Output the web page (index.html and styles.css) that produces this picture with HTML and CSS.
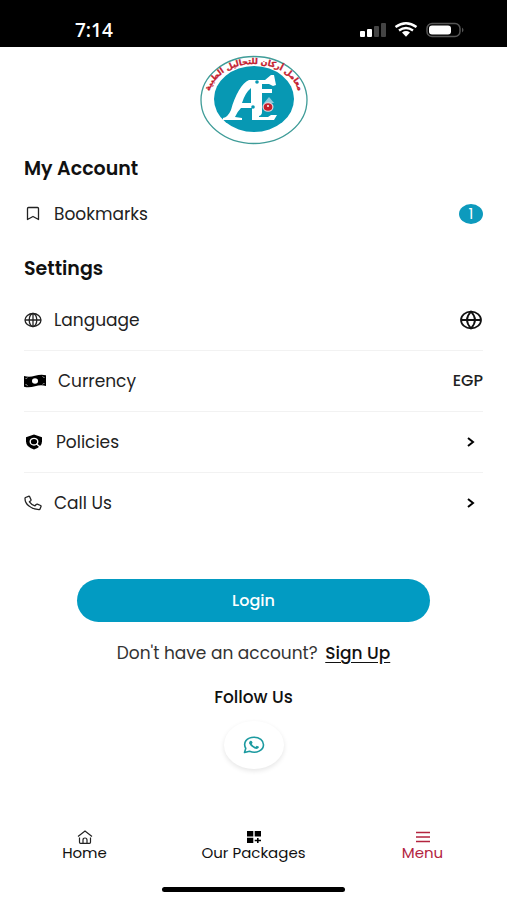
FILE: index.html
```
<!DOCTYPE html>
<html lang="en">
  <head>
    <meta charset="UTF-8" />
    <meta name="viewport" content="width=device-width, initial-scale=1.0" />
    <title>Menu</title>
    <link rel="stylesheet" href="styles.css">
  </head>

  <body>
    <div class="status">
      <span class="time">7:14</span>
      <svg width="104" height="16" viewBox="0 0 104 16">
        <g fill="#fff">
          <rect x="0" y="9" width="5" height="6" rx="1" />
          <rect x="7" y="7" width="5" height="8" rx="1" />
          <rect x="14" y="4" width="5" height="11" rx="1" fill="#444" />
          <rect x="21" y="1" width="5" height="14" rx="1" fill="#444" />
          <path d="M42 10.500Q46 7.600 50 10.500L46 14.800Z" />
        </g>
        <path d="M35.500 5Q46 -2.500 56.500 5M39 8.400Q46 3.400 53 8.400" fill="none" stroke="#fff" stroke-width="2.400" />
        <rect x="67" y="1.500" width="33" height="13" rx="5" fill="none" stroke="#555" stroke-width="1.500" />
        <rect x="69" y="3.500" width="22" height="9" rx="3" fill="#fff" />
        <path d="M102 5.500Q105 8 102 10.500Z" fill="#555" />
      </svg>
    </div>

    <main>
      <div class="logo">
        <svg width="110" height="90" viewBox="0 0 110 90" role="img" aria-label="معامل أركان للتحاليل الطبية">
          <ellipse cx="55" cy="45" rx="53" ry="43.500" fill="#fff" stroke="#3f9c98" stroke-width="1.300" />
          <ellipse cx="55" cy="44" rx="40" ry="33" fill="#0798b3" />
          <path id="arc" d="M10 42A45 33 0 0 1 100 42" fill="none" />
          <text class="logo-text" direction="rtl" text-anchor="middle"><textPath href="#arc" startOffset="50%">معامل أركان للتحاليل الطبية</textPath></text>
          <path d="M24 65V63Q29 62 32 55C36 40 43 28 50 25L66 25L72 20H75L77 30L74 31L70 29H63V34H73V38H63V57Q63 60 60 61V62H69L72 60H78L75 65H53V53H42Q38 57 36 62L43 63V65ZM43 48H52V33Q46 38 43 48Z" fill="#fff" fill-rule="evenodd" />
          <circle cx="58" cy="27" r="1.800" fill="#0798b3" />
          <circle cx="54" cy="52" r="1.800" fill="#0798b3" />
          <path d="M70 42L65 48H75Z" fill="#8fcbdc" />
          <ellipse cx="69" cy="52" rx="5.500" ry="4.800" fill="#e6d6dd" />
          <ellipse cx="69" cy="52" rx="4.300" ry="3.800" fill="#c6202c" />
          <circle cx="69" cy="51" r="1" fill="#fff" />
        </svg>
      </div>

      <h2>My Account</h2>
      <ul class="list account">
        <li>
          <a href="#bookmarks">
            <svg class="icon" width="18" height="16" viewBox="0 0 18 16"><path d="M3.500 2.500Q3.500 1.500 4.500 1.500H13.500Q14.500 1.500 14.500 2.500V13.500L9 10.500L3.500 13.500Z" fill="none" stroke="#222" stroke-width="1.300" stroke-linejoin="round" /></svg>
            <span>Bookmarks</span>
            <span class="badge">1</span>
          </a>
        </li>
      </ul>

      <h2>Settings</h2>
      <ul class="list">
        <li>
          <a href="#language">
            <svg class="icon" width="18" height="16" viewBox="0 0 18 16"><g fill="none" stroke="#222" stroke-width="1.300"><ellipse cx="9" cy="8" rx="8" ry="6.500" /><ellipse cx="9" cy="8" rx="3.800" ry="6.500" /><path d="M1 8H17M9 1.500V14.500" /></g></svg>
            <span>Language</span>
            <svg class="end" width="24" height="20" viewBox="0 0 24 20"><g fill="none" stroke="#111" stroke-width="1.800"><ellipse cx="12" cy="10" rx="10" ry="8.300" /><path d="M2 10H22M12 1.700Q4 10 12 18.300Q20 10 12 1.700Z" /></g></svg>
          </a>
        </li>
        <li>
          <a href="#currency">
            <svg class="icon" width="22" height="14" viewBox="0 0 22 14"><path d="M0 2Q5 3.500 11 1.800Q17 0 22 1.300V12Q17 10.500 11 12.200Q5 14 0 12.700Z" fill="#000" /><ellipse cx="11" cy="7" rx="3" ry="2.800" fill="#fff" /><path d="M1.500 4.500Q3 4.500 3.500 3.700M1.500 10.500Q3 10.500 3.500 11.800M20.500 3.500Q19 3.500 18.500 2.300M20.500 9.500Q19 9.500 18.500 10.300" fill="none" stroke="#fff" stroke-width=".6" /></svg>
            <span>Currency</span>
            <span class="end code">EGP</span>
          </a>
        </li>
        <li>
          <a href="#policies">
            <svg class="icon" width="20" height="16" viewBox="0 0 20 16"><path d="M10 .500L18 3.200V7.500Q18 13 10 15.500Q2 13 2 7.500V3.200Z" fill="#000" /><ellipse cx="10" cy="7.700" rx="3.800" ry="3.300" fill="none" stroke="#fff" stroke-width="1.400" /><path d="M12.300 9.800L17 13.800" stroke="#fff" stroke-width="1.400" /></svg>
            <span>Policies</span>
            <svg class="end chevron" width="8" height="12" viewBox="0 0 8 12"><path d="M1 2L6 6L1 10" fill="none" stroke="#000" stroke-width="2" /></svg>
          </a>
        </li>
        <li>
          <a href="#call">
            <svg class="icon" width="18" height="16" viewBox="0 0 18 16"><path d="M1.500 2.500L4.500 1.300Q5.300 1 5.700 1.700L7 4.700Q7.200 5.200 6.700 5.700L5.400 6.800Q7.400 9.700 11 10.800L12.200 9.500Q12.700 9 13.300 9.200L16.600 10.500Q17.300 10.800 17 11.500L16 14Q15.800 14.700 15 14.600C7 14.300 1 9.300 1 3.400Q1 2.800 1.500 2.500Z" fill="none" stroke="#222" stroke-width="1.300" stroke-linejoin="round" /></svg>
            <span>Call Us</span>
            <svg class="end chevron" width="8" height="12" viewBox="0 0 8 12"><path d="M1 2L6 6L1 10" fill="none" stroke="#000" stroke-width="2" /></svg>
          </a>
        </li>
      </ul>

      <button class="login" type="button">Login</button>
      <p class="signup">Don't have an account? <a href="#signup">Sign Up</a></p>

      <h3>Follow Us</h3>
      <a class="whatsapp" href="#whatsapp" aria-label="WhatsApp">
        <svg width="22" height="18" viewBox="0 0 22 18"><path d="M1.500 16.500L2.800 12.300C-.500 6.500 4 1.200 11 1.200C16.500 1.200 20.500 4.500 20.500 8.700C20.500 14.300 13.500 18 6.500 15.200Z" fill="none" stroke="#1c9aa0" stroke-width="1.600" stroke-linejoin="round" /><path d="M7.500 4.800Q8.500 4.500 9 5.500L9.600 6.800L8.700 8Q10 10.200 12.500 10.900L13.700 9.800L16 10.800C15.700 13 13.500 13.300 11.500 12.500Q7.500 11 6 7.300Q6 5.500 7.500 4.800Z" fill="#1c9aa0" /></svg>
      </a>
    </main>

    <nav class="tabs">
      <a href="#home">
        <svg width="16" height="14" viewBox="0 0 16 14"><g fill="none" stroke="#222" stroke-width="1.200"><path d="M1 6.500L8 1L15 6.500M2.500 7.500V12.300Q2.500 13.300 3.500 13.300H12.500Q13.500 13.300 13.500 12.300V7.500" /><path d="M6 13V10Q6 8 8 8Q10 8 10 10V13" /></g></svg>
        <span>Home</span>
      </a>
      <a href="#packages">
        <svg width="16" height="14" viewBox="0 0 16 14"><path d="M1 1H7.300V6.500H1ZM8.700 1H15V6.500H8.700ZM1 7.700H7.300V13H1ZM11 8H12.600V9.800H15V11.200H12.600V13H11V11.200H8.700V9.800H11Z" fill="#000" /></svg>
        <span>Our Packages</span>
      </a>
      <a class="active" href="#menu">
        <svg width="16" height="14" viewBox="0 0 16 14"><path d="M1 2.500H15M1 7H15M1 11.500H15" stroke="#b3243f" stroke-width="1.300" /></svg>
        <span>Menu</span>
      </a>
    </nav>
    <div class="indicator"></div>
  </body>
</html>
```

FILE: styles.css
```
* {
  box-sizing: border-box;
}

body {
  display: flex;
  flex-direction: column;
  min-height: 100vh;
  margin: 0;
  background-color: #fff;
  color: #111;
  font-family: "Poppins", "Inter", sans-serif;
  font-size: 17px;
  line-height: 24px;
}

a {
  color: inherit;
  text-decoration: none;
}

h2,
h3,
p {
  margin: 0;
}

svg {
  display: block;
  flex: none;
}

.status {
  display: flex;
  align-items: center;
  justify-content: space-between;
  height: 47px;
  padding: 12px 43px 0 75px;
  background-color: #000;
  color: #fff;
}

.time {
  font-family: "Open Sans", sans-serif;
  font-size: 19px;
  font-weight: 600;
}

main {
  display: flex;
  flex-direction: column;
  padding: 8px 24px 0;
}

.logo {
  align-self: center;
}

.logo-text {
  fill: #c4202f;
  font-family: "DejaVu Sans", sans-serif;
  font-size: 8px;
  font-weight: 700;
  stroke: #c4202f;
  stroke-width: 0.3px;
}

h2 {
  margin-top: 12px;
  font-size: 19px;
  font-weight: 600;
}

.list {
  margin: 0;
  padding: 0;
  list-style: none;
}

.list a {
  display: flex;
  align-items: center;
  height: 60px;
  color: #222;
}

.list li + li {
  border-top: 1px solid #f2f2f2;
}

.list + h2 {
  margin-top: 13px;
}

.list:not(.account) {
  margin-top: 9px;
}

.account {
  margin-top: 3px;
}

.icon {
  margin-right: 12px;
}

.badge {
  width: 24px;
  height: 20px;
  margin-left: auto;
  border-radius: 50%;
  background-color: #0d9abd;
  color: #fff;
  font-size: 15px;
  line-height: 20px;
  text-align: center;
}

.end {
  margin-left: auto;
}

.code {
  font-size: 16px;
  font-weight: 500;
}

.chevron {
  margin-right: 8px;
}

.login {
  align-self: center;
  width: 77%;
  height: 43px;
  margin-top: 46px;
  border: 0;
  border-radius: 22px;
  background-color: #029bc2;
  color: #fff;
  font: inherit;
  font-size: 16px;
  font-weight: 500;
}

.signup {
  margin-top: 19px;
  color: #333;
  text-align: center;
}

.signup a {
  margin-left: 3px;
  color: #111;
  font-weight: 500;
  text-decoration: underline;
  text-underline-offset: 3px;
}

h3 {
  margin-top: 20px;
  font-size: 17px;
  font-weight: 500;
  text-align: center;
}

.whatsapp {
  display: flex;
  align-items: center;
  justify-content: center;
  align-self: center;
  width: 60px;
  height: 48px;
  margin-top: 12px;
  border-radius: 50%;
  box-shadow: 0 2px 5px rgba(0, 0, 0, 0.1);
}

.tabs {
  display: grid;
  grid-template-columns: repeat(3, 1fr);
  margin-top: auto;
  padding-bottom: 25px;
  font-size: 15px;
  line-height: 18px;
}

.tabs a {
  display: flex;
  flex-direction: column;
  align-items: center;
}

.tabs .active {
  color: #b3243f;
}

.indicator {
  align-self: center;
  width: 36%;
  height: 5px;
  margin-bottom: 8px;
  border-radius: 3px;
  background-color: #000;
}
```
